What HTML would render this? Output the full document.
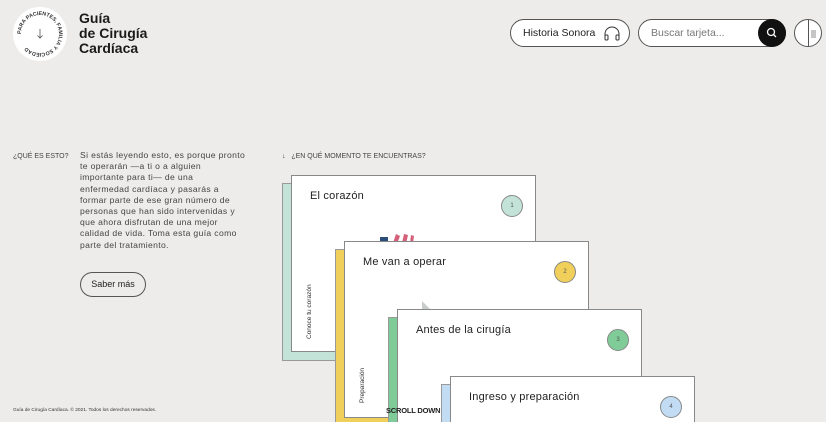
<!DOCTYPE html>
<html style="width:826px;height:422px;overflow:hidden"><head><meta charset="utf-8"><style>
*{margin:0;padding:0;box-sizing:border-box}
body{width:826px;height:422px;overflow:hidden;background:#edecea;font-family:"Liberation Sans",sans-serif;color:#222;position:relative}
#wrap{position:absolute;left:0;top:0;width:826px;height:422px;overflow:hidden}
.abs{position:absolute}
.logo{left:13px;top:7px;width:54px;height:54px;border-radius:50%;background:#fff}
.title{left:79px;top:11px;font-size:14px;font-weight:bold;line-height:15px;color:#1a1a1a}
.pill{border:1px solid #555;border-radius:16px;background:#fff;height:28px}
.card{position:absolute;width:245px;height:177px}
.card .back{position:absolute;left:-9px;top:8px;width:245px;height:178px;border:1px solid #999}
.card .front{position:absolute;left:0;top:0;width:245px;height:177px;background:#fff;border:1px solid #888}
.card .t{position:absolute;left:18px;top:14px;font-size:11px;color:#222;letter-spacing:.2px}
.card .n{position:absolute;left:209px;top:19px;width:22px;height:22px;border-radius:50%;border:1px solid #888;font-size:6px;text-align:center;line-height:20px;color:#555}
.card .v{position:absolute;left:12px;bottom:14px;font-size:6.5px;color:#333;transform:rotate(-90deg);transform-origin:left bottom;white-space:nowrap;width:0}
.small{font-size:7px;color:#444}
p{font-size:8.6px;line-height:11.2px;color:#444;letter-spacing:.35px}
</style></head><body><div id="wrap">
<div class="abs logo">
<svg width="54" height="54" viewBox="0 0 54 54"><defs><path id="c" d="M27,27 m-19,0 a19,19 0 1,1 38,0 a19,19 0 1,1 -38,0"/></defs>
<text font-size="5.3" font-family="Liberation Sans" font-weight="bold" fill="#333"><textPath href="#c" startOffset="0%">PARA PACIENTES, FAMILIA Y SOCIEDAD</textPath></text>
<path d="M27 22v9M24.5 28.5l2.5 2.5 2.5-2.5" stroke="#555" fill="none" stroke-width="0.8"/></svg></div>
<div class="abs title">Guía<br>de Cirugía<br>Cardíaca</div>

<div class="abs pill" style="left:510px;top:19px;width:120px;font-size:10.5px;line-height:26px;padding-left:12px;color:#222">Historia Sonora
<svg class="abs" style="left:92px;top:6px" width="18" height="16" viewBox="0 0 18 16"><path d="M2 11V8a7 7 0 0 1 14 0v3" fill="none" stroke="#333" stroke-width="1"/><rect x="2" y="9" width="3" height="5" rx="1" fill="none" stroke="#333"/><rect x="13" y="9" width="3" height="5" rx="1" fill="none" stroke="#333"/></svg></div>
<div class="abs pill" style="left:638px;top:19px;width:148px;font-size:10.5px;line-height:26px;padding-left:12px;color:#777">Buscar tarjeta...
<div class="abs" style="right:-1px;top:-1px;width:28px;height:28px;border-radius:50%;background:#111"><svg width="28" height="28"><circle cx="13" cy="13" r="3.5" stroke="#fff" fill="none" stroke-width="1.3"/><path d="M15.5 15.5l2.5 2.5" stroke="#fff" stroke-width="1.3"/></svg></div></div>
<div class="abs pill" style="left:794px;top:19px;width:28px;border-radius:50%">
<div class="abs" style="left:13px;top:0;width:1px;height:26px;background:#555"></div>
<svg class="abs" style="left:16px;top:10px" width="6" height="8"><path d="M0 1h5M0 3h5M0 5h5M0 7h5" stroke="#666" stroke-width=".7"/></svg></div>

<div class="abs small" style="left:13px;top:153px">¿QUÉ ES ESTO?</div>
<p class="abs" style="left:80px;top:150px;width:172px">Si estás leyendo esto, es porque pronto<br>te operarán —a ti o a alguien<br>importante para ti— de una<br>enfermedad cardíaca y pasarás a<br>formar parte de ese gran número de<br>personas que han sido intervenidas y<br>que ahora disfrutan de una mejor<br>calidad de vida. Toma esta guía como<br>parte del tratamiento.</p>
<div class="abs pill" style="left:80px;top:272px;width:66px;height:25px;font-size:9px;line-height:23px;text-align:center;background:transparent">Saber más</div>
<div class="abs small" style="left:282px;top:153px">↓&nbsp;&nbsp;&nbsp;¿EN QUÉ MOMENTO TE ENCUENTRAS?</div>
<div class="abs" style="left:13px;top:408px;font-size:4.8px;color:#333">Guía de Cirugía Cardíaca. © 2021. Todos los derechos reservados.</div>

<div class="card" style="left:291px;top:175px"><div class="back" style="background:#c3e3d9"></div><div class="front"><div class="t">El corazón</div><div class="n" style="background:#c3e3d9">1</div><div class="v" style="bottom:12px;left:21px">Conoce tu corazón</div>
<svg class="abs" style="left:88px;top:56px" width="50" height="12"><rect x="0" y="5" width="8" height="6" fill="#2a4d7a"/><path d="M13 11l3-9 4 2-3 8zM22 11l2-9 4 1-2 9zM30 11l1-8 3 1-1 7z" fill="#d4607a"/></svg></div></div>
<div class="card" style="left:344px;top:241px;height:181px"><div class="back" style="background:#f0cf5a"></div><div class="front"><div class="t">Me van a operar</div><div class="n" style="background:#f0cf5a">2</div><div class="v" style="bottom:14px;left:21px">Preparación</div>
<svg class="abs" style="left:76px;top:58px" width="10" height="12"><path d="M1 12V1l8 8z" fill="#c8ccca"/></svg></div></div>
<div class="card" style="left:397px;top:309px"><div class="back" style="background:#7fcc98"></div><div class="front"><div class="t">Antes de la cirugía</div><div class="n" style="background:#7fcc98">3</div></div></div>
<div class="abs" style="left:386px;top:406px;font-size:7.5px;color:#222;font-weight:bold;letter-spacing:-.2px;z-index:1">SCROLL DOWN ♡</div>
<div class="card" style="left:450px;top:376px;z-index:2"><div class="back" style="background:#c2dcf3"></div><div class="front"><div class="t">Ingreso y preparación</div><div class="n" style="background:#c2dcf3">4</div></div></div>
</div></body></html>
